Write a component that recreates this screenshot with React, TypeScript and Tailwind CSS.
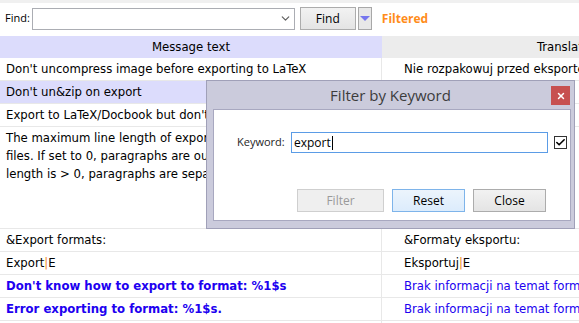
import { ChevronDown, X, Check } from "lucide-react";

const grid = "font-['DejaVu_Sans_Condensed','DejaVu_Sans',sans-serif] text-[13px]";
const ui = "font-['Open_Sans','Noto_Sans',sans-serif]";

type Row = { src: React.ReactNode; tr: React.ReactNode; h?: string; sel?: boolean; blue?: boolean };

const rows: Row[] = [
  { src: "Don't uncompress image before exporting to LaTeX", tr: "Nie rozpakowuj przed eksportem do LaTeX" },
  { src: "Don't un&zip on export", tr: "", sel: true },
  { src: "Export to LaTeX/Docbook but don't uncompress", tr: "" },
  {
    src: (
      <span className="block leading-[18px]">
        The maximum line length of exported LaTeX
        <br />
        files. If set to 0, paragraphs are output in
        <br />
        length is &gt; 0, paragraphs are separated
      </span>
    ),
    tr: "",
    h: "h-[102px]",
  },
  { src: "&Export formats:", tr: "&Formaty eksportu:" },
  {
    src: (
      <>
        Export<span className="text-[#f08a24]">|</span>E
      </>
    ),
    tr: (
      <>
        Eksportuj<span className="text-[#f08a24]">|</span>E
      </>
    ),
  },
  { src: "Don't know how to export to format: %1$s", tr: "Brak informacji na temat formatu: %1$s", blue: true },
  { src: "Error exporting to format: %1$s.", tr: "Brak informacji na temat formatu: %1$s", blue: true },
  { src: "", tr: "" },
];

export default function App() {
  return (
    <div className="relative h-[323px] w-[579px] overflow-hidden bg-white">
      <div className="h-[3px] bg-[#f0f0f0]" />
      <div className={`flex h-[33px] items-center pb-[2px] ${ui}`}>
        <span className="ml-[5px] text-[11px] text-black">Find:</span>
        <div className="ml-[2px] flex h-[22px] w-[263px] shrink-0 items-center justify-end border border-[#abadb3] bg-white pr-[2px]">
          <ChevronDown size={13} strokeWidth={2.2} className="text-[#606060]" />
        </div>
        <button className="ml-[5px] h-[23px] w-[56px] shrink-0 border border-[#acacac] bg-gradient-to-b from-[#f2f2f2] to-[#e4e4e4] text-[12px] text-black">
          Find
        </button>
        <div className="ml-[2px] flex h-[23px] w-[14px] shrink-0 items-center justify-center border border-[#a8a8a8] bg-[#e8e8e8]">
          <div className="h-0 w-0 border-x-[5px] border-t-[5px] border-x-transparent border-t-[#7676ee]" />
        </div>
        <span className="ml-[10px] text-[12px] font-bold text-[#ff8c1a]">Filtered</span>
      </div>

      <div className={grid}>
        <div className="flex h-[22px] items-center text-black">
          <div className="flex h-full w-[382px] shrink-0 items-center justify-center bg-[#dcdcfc]">Message text</div>
          <div className="flex h-full flex-1 items-center overflow-hidden whitespace-nowrap bg-[#ececec] pl-[155px]">
            Translated text
          </div>
        </div>
        {rows.map((r, i) => (
          <div
            key={i}
            className={`flex border-b border-[#e8e8e8] ${r.h ?? "h-[23px] items-center"} ${
              r.blue ? "text-[#2000f0]" : "text-black"
            }`}
          >
            <div
              className={`flex h-full w-[382px] shrink-0 overflow-hidden whitespace-nowrap border-r border-[#e8e8e8] pl-[6px] ${
                r.h ? "pt-[2px]" : "items-center"
              } ${r.sel ? "bg-[#dcdcfc]" : ""} ${r.blue ? "font-bold" : ""}`}
            >
              {r.src}
            </div>
            <div className={`flex h-full min-w-0 flex-1 overflow-hidden whitespace-nowrap pl-[22px] ${r.h ? "pt-[2px]" : "items-center"}`}>
              {r.tr}
            </div>
          </div>
        ))}
      </div>

      <div className={`absolute left-[206px] top-[80px] flex h-[149px] w-[369px] flex-col border border-[#a0a0b8] bg-[#cbcbdc] ${ui}`}>
        <div className="relative flex h-[28px] shrink-0 items-center justify-center">
          <span className="text-[15px] text-[#3c3c3c]">Filter by Keyword</span>
          <div className="absolute right-[4px] top-[5px] flex h-[19px] w-[19px] items-center justify-center bg-[#c75050]">
            <X size={10} strokeWidth={3.5} className="text-white" />
          </div>
        </div>
        <div className="mb-[7px] ml-[6px] mr-[3px] flex flex-1 flex-col border border-[#a8a8c0] bg-white">
          <div className="mt-[22px] flex items-center">
            <span className="ml-[23px] w-[53px] shrink-0 whitespace-nowrap text-[11px] text-[#1e1e1e]">Keyword:</span>
            <div className="ml-[1px] flex h-[21px] w-[257px] shrink-0 items-center border border-[#5b9ce6] pl-[2px] text-[12px] text-black">
              export<span className="ml-[1px] h-[14px] w-px bg-black" />
            </div>
            <div className="ml-[6px] flex h-[13px] w-[13px] shrink-0 items-center justify-center border border-[#333] bg-white">
              <Check size={11} strokeWidth={3.5} className="text-black" />
            </div>
          </div>
          <div className="mt-[36px] flex gap-[8px] pl-[83px] text-[12px]">
            <button className="h-[23px] w-[87px] border border-[#cfcfcf] bg-[#efefef] text-[#9a9a9a]">Filter</button>
            <button className="h-[23px] w-[73px] border border-[#7eb4ea] bg-gradient-to-b from-[#ecf4fc] to-[#dcecfc] text-black">
              Reset
            </button>
            <button className="h-[23px] w-[73px] border border-[#acacac] bg-gradient-to-b from-[#f2f2f2] to-[#e4e4e4] text-black">
              Close
            </button>
          </div>
        </div>
      </div>
    </div>
  );
}
